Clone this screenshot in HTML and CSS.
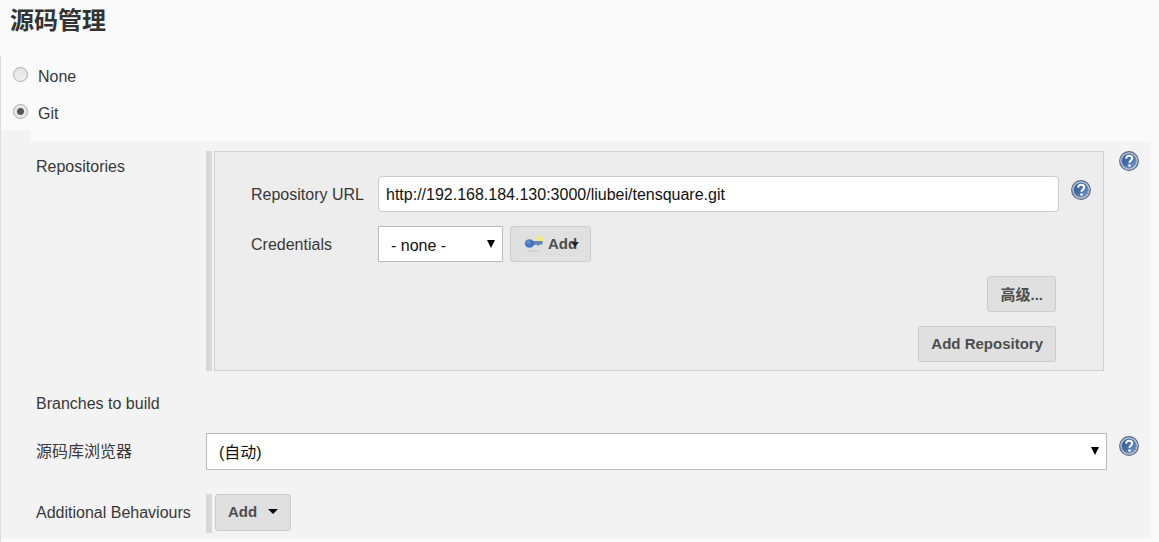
FILE: index.html
```html
<!DOCTYPE html>
<html lang="zh-CN">
<head>
    <meta charset="UTF-8">
    <meta name="viewport" content="width=device-width, initial-scale=1.0">
    <title>源码管理</title>
    <link rel="stylesheet" href="styles.css">
</head>
<body>
    <!-- shared help icon -->
    <svg class="sprite" width="0" height="0" aria-hidden="true">
        <defs>
            <linearGradient id="help-fill" x1="0" y1="0" x2="1" y2="1">
                <stop offset="0" stop-color="#2c5796"/>
                <stop offset="0.5" stop-color="#4470ad"/>
                <stop offset="1" stop-color="#7fa3d2"/>
            </linearGradient>
        </defs>
        <symbol id="help-icon" viewBox="0 0 20 20">
            <circle cx="10" cy="10" r="9.3" fill="#c3d0e2" stroke="#56657d" stroke-width="1.2"/>
            <circle cx="10" cy="10" r="7.3" fill="url(#help-fill)" stroke="#6a89b0" stroke-width="0.6"/>
            <path d="M7.1 7.6C7.2 5.6 8.5 4.7 10.2 4.7C12 4.7 13.2 5.7 13.2 7.3C13.2 9.4 10.5 9.6 10.5 11.8" fill="none" stroke="#fff" stroke-width="2.1"/>
            <circle cx="10.5" cy="14.5" r="1.3" fill="#fff"/>
        </symbol>
    </svg>

    <form>
        <h2 class="section-header">源码管理</h2>

        <div class="scm">
            <div class="radio-row">
                <input type="radio" id="scm-none" name="scm">
                <label for="scm-none">None</label>
            </div>
            <div class="radio-row">
                <input type="radio" id="scm-git" name="scm" checked>
                <label for="scm-git">Git</label>
            </div>
            <div class="indent"></div>

            <div class="git-panel">
                <div class="row repositories">
                    <div class="row-label">Repositories</div>
                    <div class="repeated">
                        <div class="repo-box">
                            <div class="repo-row">
                                <label for="repo-url">Repository URL</label>
                                <input type="text" id="repo-url" class="text-input" value="http://192.168.184.130:3000/liubei/tensquare.git">
                                <a href="#" class="help" aria-label="Help"><svg width="20" height="20"><use href="#help-icon"/></svg></a>
                            </div>
                            <div class="repo-row">
                                <label for="credentials">Credentials</label>
                                <div class="credentials">
                                    <div class="select-wrap">
                                        <select id="credentials">
                                            <option>- none -</option>
                                        </select>
                                    </div>
                                    <button type="button" class="btn add-key">
                                        <svg width="20" height="20" viewBox="0 0 20 20" aria-hidden="true">
                                            <path d="M11.500 8C12.500 4 14 2.500 15.500 2.500C17.500 2.500 19 5 19.500 8Z" fill="#f1ec7a"/>
                                            <ellipse cx="9" cy="18" rx="7" ry="1" fill="#d4d4ce"/>
                                            <path d="M8 8H18.500V11.500H16L15 12.500H13.500L12.500 11.500L8 12.500Z" fill="#5f87bd"/>
                                            <ellipse cx="5.500" cy="10.500" rx="4.700" ry="4.300" fill="#4278bb"/>
                                            <circle cx="4.500" cy="9.200" r="2" fill="#5f8fca"/>
                                        </svg>
                                        <span>Add</span>
                                    </button>
                                </div>
                            </div>
                            <div class="repo-actions">
                                <button type="button" class="btn">高级...</button>
                                <button type="button" class="btn">Add Repository</button>
                            </div>
                        </div>
                    </div>
                    <a href="#" class="help" aria-label="Help"><svg width="20" height="20"><use href="#help-icon"/></svg></a>
                </div>

                <div class="row branches">
                    <div class="row-label">Branches to build</div>
                </div>

                <div class="row browser">
                    <label class="row-label" for="repo-browser">源码库浏览器</label>
                    <div class="select-wrap">
                        <select id="repo-browser">
                            <option>(自动)</option>
                        </select>
                    </div>
                    <a href="#" class="help" aria-label="Help"><svg width="20" height="20"><use href="#help-icon"/></svg></a>
                </div>

                <div class="row">
                    <div class="row-label">Additional Behaviours</div>
                    <div class="repeated behaviours">
                        <button type="button" class="btn">Add <span class="caret"></span></button>
                    </div>
                </div>
            </div>
        </div>
    </form>
</body>
</html>
```
FILE: styles.css
```css
* {
    box-sizing: border-box;
}

body {
    margin: 0;
    background-color: #fafafa;
    color: #383838;
    font-family: "Liberation Sans", Arial, "Noto Sans CJK SC", sans-serif;
    font-size: 16px;
    line-height: 20px;
}

.sprite {
    position: absolute;
}

.section-header {
    margin: 0 0 14px;
    padding: 8px 10px;
    color: #333;
    font-size: 24px;
    line-height: 26px;
}

.scm {
    border-left: 1px solid #ddd;
    padding-bottom: 4px;
}

.radio-row {
    display: flex;
    align-items: center;
    gap: 10px;
    height: 37px;
    padding-left: 12px;
}

.radio-row label {
    padding-top: 4px;
}

.radio-row input {
    appearance: none;
    width: 15px;
    height: 15px;
    margin: 0;
    border: 1px solid #aaa;
    border-radius: 50%;
    background: linear-gradient(#e2e2e2, #f0f0f0);
}

.radio-row input:checked {
    background: radial-gradient(circle, #555 0 3px, #e8e8e8 4px);
}

.indent {
    width: 29px;
    height: 12px;
    background-color: #f3f3f3;
}

/* Git settings */
.git-panel {
    margin-right: 8px;
    padding: 9px 12px 5px 35px;
    background-color: #f3f3f3;
}

.row {
    display: grid;
    grid-template-columns: 170px 1fr 32px;
    align-items: start;
}

.row-label {
    padding-top: 9px;
}

.repositories .row-label {
    padding-top: 6px;
}

.branches {
    margin: 14px 0 19px;
}

.browser {
    margin-bottom: 24px;
}

.help {
    display: block;
    width: 20px;
    height: 20px;
    margin-left: 12px;
}

.help svg {
    display: block;
}

.browser .help {
    margin-top: 3px;
}

.repeated {
    margin-right: 3px;
    padding-left: 2px;
    border-left: 6px solid #d8d8d8;
}

.repo-box {
    padding: 24px 12px 8px 36px;
    border: 1px solid #d0d0d0;
    background-color: #ededed;
}

.repo-row {
    display: grid;
    grid-template-columns: 127px 1fr 32px;
    margin-bottom: 14px;
}

.repo-row label {
    padding-top: 9px;
}

.repo-row .help {
    margin-top: 4px;
}

.text-input {
    width: 100%;
    height: 36px;
    padding: 2px 7px 0;
    border: 1px solid #ccc;
    border-radius: 4px;
    background-color: #fff;
    color: #111;
    font: inherit;
}

.credentials {
    display: flex;
    gap: 7px;
}

.credentials .select-wrap {
    width: 125px;
}

.select-wrap {
    position: relative;
}

.select-wrap select {
    appearance: none;
    display: block;
    width: 100%;
    height: 36px;
    padding: 3px 12px 0;
    border: 1px solid #bbb;
    border-radius: 0;
    background-color: #fff;
    color: #111;
    font: inherit;
}

.browser select {
    height: 37px;
}

.select-wrap::after {
    content: "";
    position: absolute;
    top: 14px;
    right: 8px;
    border: 4px solid transparent;
    border-top: 8px solid #000;
    border-bottom: 0;
    pointer-events: none;
}

.btn {
    height: 36px;
    padding: 0 12px 2px;
    border: 1px solid #ccc;
    border-radius: 3px;
    background-color: #e0e0e0;
    color: #4d4d4d;
    font-family: inherit;
    font-size: 15px;
    font-weight: bold;
}

.add-key {
    display: flex;
    align-items: center;
    gap: 4px;
    position: relative;
    width: 81px;
    padding-left: 13px;
}

.add-key::after {
    content: "";
    position: absolute;
    top: 15px;
    right: 11px;
    border: 4px solid transparent;
    border-top: 5px solid #222;
    border-bottom: 0;
}

.repo-actions {
    display: flex;
    flex-direction: column;
    align-items: flex-end;
    gap: 14px;
    padding-right: 35px;
}

.behaviours {
    padding-bottom: 2px;
}

.behaviours .btn {
    display: flex;
    align-items: center;
    gap: 11px;
    height: 37px;
    margin-left: 1px;
}

.caret {
    border: 5px solid transparent;
    border-top: 5px solid #000;
    border-bottom: 0;
}
```
